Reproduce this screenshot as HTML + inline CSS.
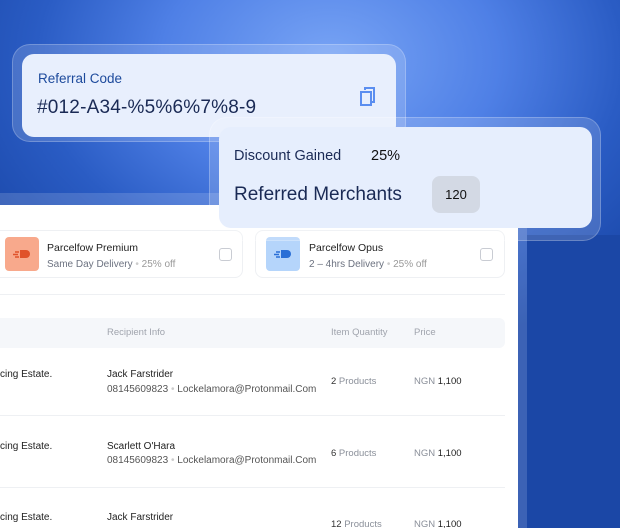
<!DOCTYPE html>
<html><head><style>
*{margin:0;padding:0;box-sizing:border-box}
html,body{width:620px;height:528px;overflow:hidden}
body{position:relative;font-family:"Liberation Sans",sans-serif;
background:radial-gradient(ellipse 420px 300px at 330px 60px,#78a4f5 0%,#4f80e6 40%,#2a5cc4 70%,#1a47a8 100%);}
.abs{position:absolute}
.panel{left:-10px;top:205px;width:528px;height:340px;background:#fff;border-radius:6px}
.glassp{left:-10px;top:193px;width:537px;height:350px;background:rgba(255,255,255,.15);border-radius:10px}
.rightcol{left:527px;top:235px;width:93px;height:300px;background:#1b47a6}
.card{background:#e8effd;border-radius:12px}
.glass{background:rgba(255,255,255,.16);border:1px solid rgba(255,255,255,.22);border-radius:18px}
.t{color:#1a2a55}
.opt{border:1px solid #eef0f3;border-radius:8px;height:48px;top:230px}
.ico{width:34px;height:34px;border-radius:4px;top:237px}
.cb{width:13px;height:13px;border:1.5px solid #c9ccd3;border-radius:3px;top:248px}
.s{font-size:11px;color:#222}
.g{font-size:10px;color:#8a8f99}
.row{border-top:1px solid #eef0f3;left:-10px;width:515px}
</style></head><body>
<div class="abs glassp"></div>
<div class="abs panel"></div>
<div class="abs rightcol"></div>

<div class="abs opt" style="left:-10px;width:253px"></div>
<div class="abs ico" style="left:5px;background:#f8a98c"></div>
<svg class="abs" style="left:13px;top:248px" width="20" height="12"><path d="M7 2h6a4 4 0 0 1 0 8H7z" fill="#e0522a"/><path d="M2 4h4M0 6.5h5M2 9h4" stroke="#e0522a" stroke-width="1.4"/></svg>
<div class="abs s" style="left:47px;top:242px;font-size:10.5px">Parcelfow Premium</div>
<div class="abs g" style="left:47px;top:259px;color:#6c7280">Same Day Delivery <span style="color:#ccc">•</span> <span style="color:#999">25% off</span></div>
<div class="abs cb" style="left:219px"></div>

<div class="abs opt" style="left:255px;width:250px"></div>
<div class="abs ico" style="left:266px;background:#b5d5fb"></div>
<svg class="abs" style="left:274px;top:248px" width="20" height="12"><path d="M7 2h6a4 4 0 0 1 0 8H7z" fill="#2a6fd6"/><path d="M2 4h4M0 6.5h5M2 9h4" stroke="#2a6fd6" stroke-width="1.4"/></svg>
<div class="abs s" style="left:309px;top:242px;font-size:10.5px">Parcelfow Opus</div>
<div class="abs g" style="left:309px;top:259px;color:#6c7280">2 – 4hrs Delivery <span style="color:#ccc">•</span> <span style="color:#999">25% off</span></div>
<div class="abs cb" style="left:480px"></div>

<div class="abs row" style="top:294px"></div>
<div class="abs" style="left:-10px;top:318px;width:515px;height:30px;background:#f5f7fa;border-radius:6px"></div>
<div class="abs g" style="left:107px;top:327px;color:#a0a4ad;font-size:9.5px">Recipient Info</div>
<div class="abs g" style="left:331px;top:327px;color:#a0a4ad;font-size:9.5px">Item Quantity</div>
<div class="abs g" style="left:414px;top:327px;color:#a0a4ad;font-size:9.5px">Price</div>

<div class="abs s" style="left:0;top:369px;font-size:10px">cing Estate.</div>
<div class="abs s" style="left:107px;top:369px;font-size:10px">Jack Farstrider</div>
<div class="abs g" style="left:107px;top:384px;color:#555;font-size:10px">08145609823 <span style="color:#ccc">•</span> Lockelamora@Protonmail.Com</div>
<div class="abs g" style="left:331px;top:376px;font-size:9.5px"><span style="color:#333">2</span> Products</div>
<div class="abs g" style="left:414px;top:376px;font-size:9.5px">NGN <span style="color:#222">1,100</span></div>
<div class="abs row" style="top:415px"></div>

<div class="abs s" style="left:0;top:441px;font-size:10px">cing Estate.</div>
<div class="abs s" style="left:107px;top:441px;font-size:10px">Scarlett O'Hara</div>
<div class="abs g" style="left:107px;top:455px;color:#555;font-size:10px">08145609823 <span style="color:#ccc">•</span> Lockelamora@Protonmail.Com</div>
<div class="abs g" style="left:331px;top:448px;font-size:9.5px"><span style="color:#333">6</span> Products</div>
<div class="abs g" style="left:414px;top:448px;font-size:9.5px">NGN <span style="color:#222">1,100</span></div>
<div class="abs row" style="top:487px"></div>

<div class="abs s" style="left:0;top:512px;font-size:10px">cing Estate.</div>
<div class="abs s" style="left:107px;top:512px;font-size:10px">Jack Farstrider</div>
<div class="abs g" style="left:331px;top:519px;font-size:9.5px"><span style="color:#333">12</span> Products</div>
<div class="abs g" style="left:414px;top:519px;font-size:9.5px">NGN <span style="color:#222">1,100</span></div>

<div class="abs glass" style="left:12px;top:44px;width:394px;height:98px"></div>
<div class="abs card" style="left:22px;top:54px;width:374px;height:83px"></div>
<div class="abs" style="left:38px;top:71px;font-size:13.5px;color:#1d4a9c">Referral Code</div>
<div class="abs t" style="left:37px;top:97px;font-size:19px;letter-spacing:.2px">#012-A34-%5%6%7%8-9</div>
<svg class="abs" style="left:358px;top:86px" width="20" height="22"><rect x="3" y="6" width="10" height="13" fill="none" stroke="#5b8ef0" stroke-width="2"/><path d="M7 4V2h9v14h-2" fill="none" stroke="#5b8ef0" stroke-width="2"/></svg>

<div class="abs glass" style="left:209px;top:117px;width:392px;height:124px"></div>
<div class="abs card" style="left:219px;top:127px;width:373px;height:101px;background:#e6eefd"></div>
<div class="abs t" style="left:234px;top:148px;font-size:14.5px">Discount Gained</div>
<div class="abs" style="left:371px;top:148px;font-size:14.5px;color:#111">25%</div>
<div class="abs t" style="left:234px;top:184px;font-size:19px">Referred Merchants</div>
<div class="abs" style="left:432px;top:176px;width:48px;height:37px;background:#d3d9e4;border-radius:8px;font-size:13px;color:#111;text-align:center;line-height:37px">120</div>
</body></html>
